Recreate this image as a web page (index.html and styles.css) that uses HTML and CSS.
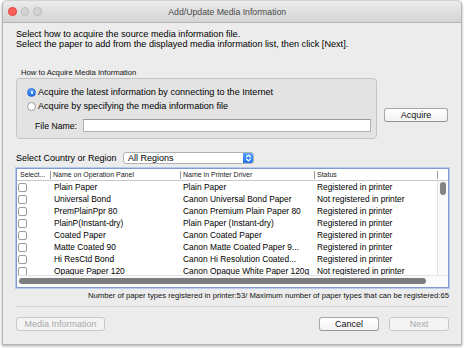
FILE: index.html
```html
<!DOCTYPE html>
<html>
<head>
<meta charset="utf-8">
<title>Add/Update Media Information</title>
<link rel="stylesheet" href="styles.css">
</head>
<body>
<div class="window">
  <div class="titlebar">
    <div class="lights"><span class="light red"></span><span class="light"></span><span class="light"></span></div>
    <div class="title">Add/Update Media Information</div>
  </div>
  <div class="content">
    <p class="intro">Select how to acquire the source media information file.<br>Select the paper to add from the displayed media information list, then click [Next].</p>

    <div class="acquire-row">
      <div class="group">
        <div class="group-label">How to Acquire Media Information</div>
        <div class="group-box">
          <div class="radio-row"><span class="radio on"></span><span>Acquire the latest information by connecting to the Internet</span></div>
          <div class="radio-row"><span class="radio"></span><span>Acquire by specifying the media information file</span></div>
          <div class="file-row"><span class="file-label">File Name:</span><span class="input"></span></div>
        </div>
      </div>
      <div class="btn acquire">Acquire</div>
    </div>

    <div class="country-row">
      <span class="country-label">Select Country or Region</span>
      <div class="select">
        <span class="select-text">All Regions</span>
        <span class="select-arrow">
          <svg width="11" height="12" viewBox="0 0 11 12"><path d="M3.5 5 L5.5 3 L7.5 5 M3.5 7 L5.5 9 L7.5 7" fill="none" stroke="#fff" stroke-width="1.1" stroke-linecap="round" stroke-linejoin="round"/></svg>
        </span>
      </div>
    </div>

    <div class="table">
      <div class="thead">
        <div class="th first">Select...</div>
        <div class="th">Name on Operation Panel</div>
        <div class="th">Name in Printer Driver</div>
        <div class="th">Status</div>
        <div class="th end"></div>
      </div>
      <div class="tbody">
        <div class="rows">
          <div class="row"><span class="cb"></span><span>Plain Paper</span><span>Plain Paper</span><span>Registered in printer</span></div>
          <div class="row"><span class="cb"></span><span>Universal Bond</span><span>Canon Universal Bond Paper</span><span>Not registered in printer</span></div>
          <div class="row"><span class="cb"></span><span>PremPlainPpr 80</span><span>Canon Premium Plain Paper 80</span><span>Registered in printer</span></div>
          <div class="row"><span class="cb"></span><span>PlainP(Instant-dry)</span><span>Plain Paper (Instant-dry)</span><span>Registered in printer</span></div>
          <div class="row"><span class="cb"></span><span>Coated Paper</span><span>Canon Coated Paper</span><span>Registered in printer</span></div>
          <div class="row"><span class="cb"></span><span>Matte Coated 90</span><span>Canon Matte Coated Paper 9...</span><span>Registered in printer</span></div>
          <div class="row"><span class="cb"></span><span>Hi ResCtd Bond</span><span>Canon Hi Resolution Coated...</span><span>Registered in printer</span></div>
          <div class="row"><span class="cb"></span><span>Opaque Paper 120</span><span>Canon Opaque White Paper 120g</span><span>Not registered in printer</span></div>
        </div>
        <div class="vscroll"><span class="vthumb"></span></div>
      </div>
      <div class="hscroll"><span class="hthumb"></span></div>
    </div>

    <p class="count">Number of paper types registered in printer:53/ Maximum number of paper types that can be registered:65</p>

    <div class="separator"></div>

    <div class="button-row">
      <div class="btn disabled media">Media Information</div>
      <div class="spacer"></div>
      <div class="btn cancel">Cancel</div>
      <div class="btn disabled next">Next</div>
    </div>
  </div>
</div>
</body>
</html>
```

FILE: styles.css
```css
* { box-sizing: border-box; margin: 0; padding: 0; }
html, body { width: 464px; height: 348px; overflow: hidden; background: #ffffff; }
body { font-family: "Liberation Sans", Arial, sans-serif; font-size: 9px; color: #000; }

.window {
  margin-left: 2px;
  width: 460px;
  height: 345px;
  background: #ececec;
  border: 1px solid #b7b7b7;
  border-top-color: #d2d2d2;
  border-radius: 5px 5px 0 0;
  box-shadow: 0 1px 3px rgba(0,0,0,0.35);
  display: flex;
  flex-direction: column;
  overflow: hidden;
}

.titlebar {
  height: 22px;
  flex: none;
  background: linear-gradient(#ebebeb, #d4d4d4);
  border-bottom: 1px solid #b3b3b3;
  display: flex;
  align-items: center;
  position: relative;
}
.lights { display: flex; gap: 4px; padding-left: 5px; }
.light {
  width: 8.5px; height: 8.5px; border-radius: 50%;
  background: #d3d3d3; border: 1px solid #bdbdbd;
}
.light.red { background: #fc5f57; border-color: #df4842; }
.title {
  flex: 1;
  text-align: center;
  font-size: 8.7px;
  color: #4a4a4a;
  margin-right: 48px;
}

.content {
  flex: 1;
  display: flex;
  flex-direction: column;
  padding: 6px 12px 0 13px;
}

.intro { line-height: 10px; font-size: 9.15px; }

.acquire-row { display: flex; align-items: flex-start; margin-top: 19px; }
.group { width: 361px; display: flex; flex-direction: column; }
.group-label { font-size: 7.7px; line-height: 9px; height: 9px; padding-left: 5px; color: #111; margin-bottom: 1px; }
.group-box {
  height: 61px;
  background: #e3e3e3;
  border: 1px solid #c4c4c4;
  border-radius: 4px;
  padding: 6px 5px 0 10px;
  display: flex;
  flex-direction: column;
}
.radio-row { height: 14px; display: flex; align-items: center; font-size: 9.1px; }
.radio {
  width: 9px; height: 9px; border-radius: 50%;
  background: #fff; border: 1px solid #9c9c9c;
  margin-right: 2px; flex: none; position: relative;
}
.radio.on { background: linear-gradient(#5ea6fb, #1c6cef); border-color: #2a6bd6; }
.radio.on::after {
  content: ""; position: absolute; left: 2.5px; top: 2.5px;
  width: 2.5px; height: 2.5px; border-radius: 50%; background: #fff;
}
.file-row { display: flex; align-items: center; margin-top: 6px; padding-left: 8px; height: 13px; }
.file-label { width: 48px; font-size: 8.7px; }
.input { flex: 1; height: 13px; background: #fff; border: 1px solid #b4b4b4; border-top-color: #9a9a9a; }

.btn {
  height: 14px;
  display: flex; align-items: center; justify-content: center;
  background: linear-gradient(#ffffff, #f3f3f3);
  border: 1px solid #a6a6a6;
  border-bottom-color: #959595;
  border-radius: 3px;
  font-size: 9px;
  color: #111;
}
.btn.disabled { background: #f4f4f4; border-color: #c9c9c9; color: #a8a8a8; }
.acquire { width: 64px; margin-left: 7px; margin-top: 40px; }

.country-row { display: flex; align-items: center; height: 12px; margin-top: 13px; }
.country-label { width: 107px; }
.select {
  width: 131px; height: 12px;
  display: flex; align-items: center;
  background: #fff;
  border: 1px solid #b1b1b1;
  border-radius: 3px;
  overflow: hidden;
}
.select-text { flex: 1; padding-left: 4px; }
.select-arrow {
  width: 11px; height: 12px; flex: none;
  background: linear-gradient(#62a8fb, #1a6cf0);
  margin-right: -1px;
  display: flex;
}

.table {
  margin-top: 4px;
  height: 120px;
  border: 1px solid #7f9ccc;
  box-shadow: 0 0 0 1px #b9cbea;
  background: #fff;
  position: relative;
  overflow: hidden;
  display: flex;
  flex-direction: column;
}
.thead {
  height: 12px; flex: none;
  display: grid;
  grid-template-columns: 33px 130px 134px 123px 1fr;
  border-bottom: 1px solid #c8c8c8;
  font-size: 7px;
  color: #222;
}
.th { display: flex; align-items: center; padding-left: 3px; position: relative; white-space: nowrap; }
.th.first { padding-left: 3px; }
.th:not(.first)::before {
  content: ""; position: absolute; left: 0; top: 2px;
  width: 1px; height: 8px; background: #9a9a9a;
}
.tbody { flex: 1; display: flex; }
.rows { flex: 1; display: flex; flex-direction: column; }
.row {
  height: 12px; flex: none;
  display: grid;
  grid-template-columns: 33px 130px 134px 1fr;
  align-items: center;
  font-size: 8.4px;
  white-space: nowrap;
}
.row span:nth-child(2) { padding-left: 4px; }
.row span:nth-child(3), .row span:nth-child(4) { padding-left: 3px; }
.cb {
  width: 9px; height: 9px; margin-left: 1px;
  border: 1px solid #9b9b9b; border-radius: 2px; background: #fff;
}
.vscroll {
  width: 11px; flex: none;
  border-left: 1px solid #e2e2e2;
  background: #fafafa;
  padding: 1px 0 0 2px;
}
.vthumb { display: block; width: 6px; height: 13px; border-radius: 3px; background: #838383; }
.hscroll {
  position: absolute; left: 0; right: 0; bottom: 0;
  height: 12px;
  background: #fafafa;
  border-top: 1px solid #e4e4e4;
  padding: 2px 0 0 2px;
}
.hthumb { display: block; width: 407px; height: 6px; border-radius: 3px; background: #7d7d7d; }

.count { margin-top: 3px; line-height: 9px; font-size: 7.7px; text-align: right; color: #111; }

.separator { margin-top: 6px; height: 1px; background: #d3d3d3; }

.button-row { display: flex; margin-top: 10px; }
.media { width: 89px; }
.spacer { flex: 1; }
.cancel { width: 60px; }
.next { width: 60px; margin-left: 10px; }
```
